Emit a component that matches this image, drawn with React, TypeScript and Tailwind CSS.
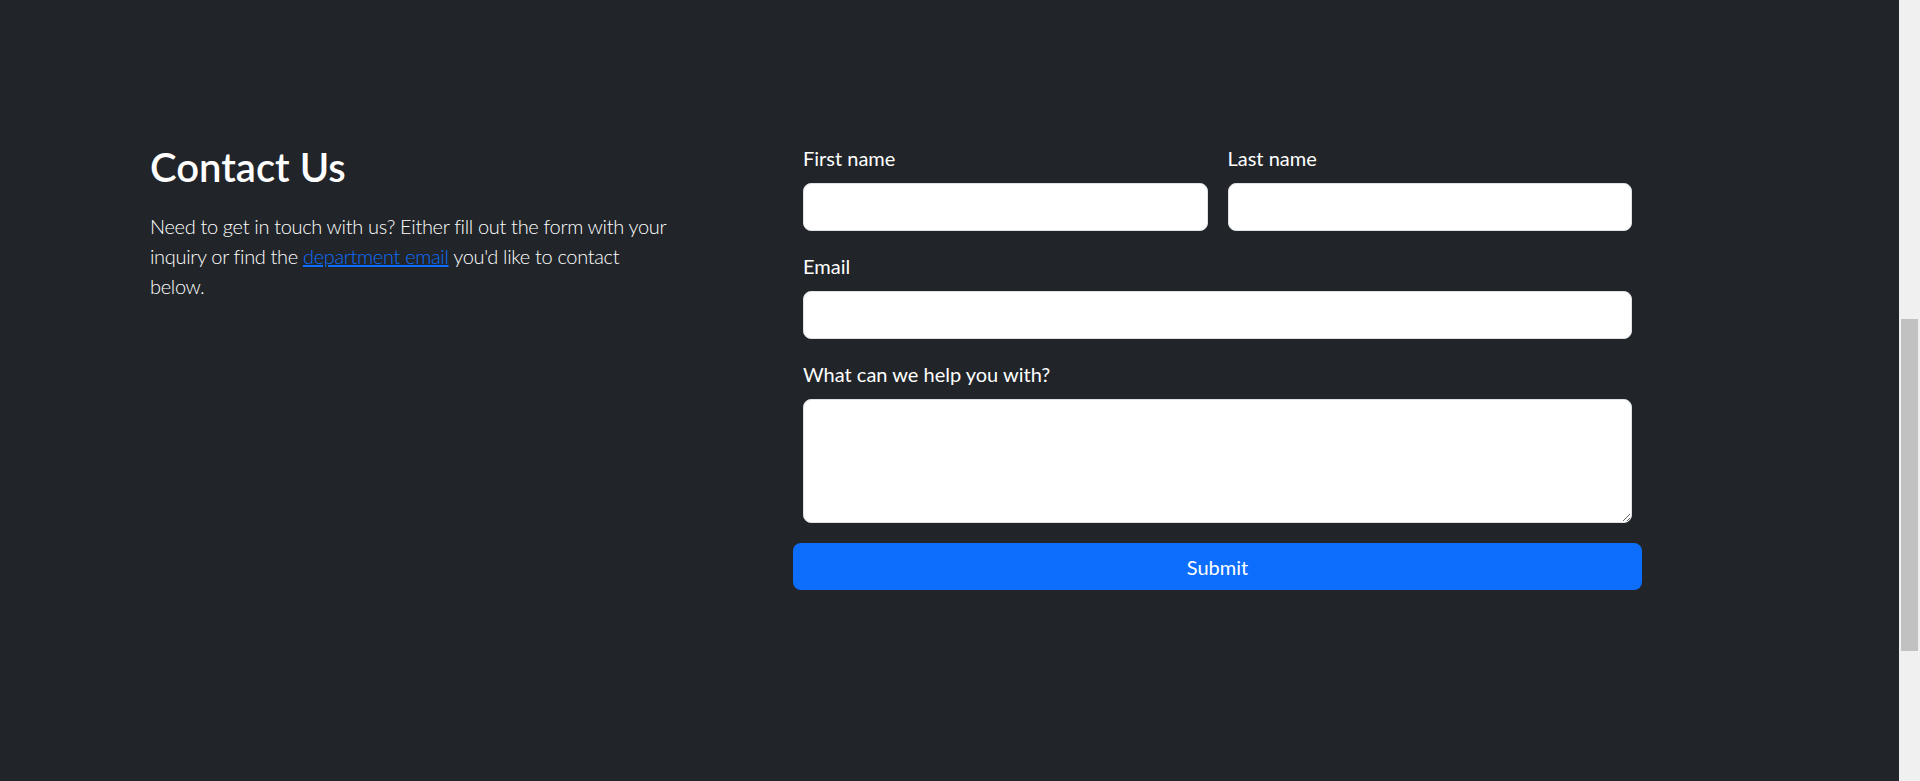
const Field = ({ label, type = 'text' }: { label: string; type?: string }) => (
    <div className="flex flex-1 flex-col">
        <label className="mb-[10px] text-[20px] leading-[30px] text-white">{label}</label>
        <input
            type={type}
            className="h-[48px] w-full rounded-[8px] border border-[#dee2e6] bg-white px-4 text-[20px] text-[#212529] outline-none"
        />
    </div>
)

const App = () => {
    return (
        <div className="flex h-[781px] w-full overflow-hidden font-['Lato',sans-serif]">
            <main className="flex-1 bg-[#212529] pt-[143px]">
                <div className="flex pl-[150px]">
                    {/* Intro */}
                    <div className="w-[527px]">
                        <h1 className="text-[40px] font-semibold leading-[48px] text-white">Contact Us</h1>
                        <p className="mt-[20px] text-[20px] font-light leading-[30px] tracking-[-0.33px] text-white">
                            Need to get in touch with us? Either fill out the form with your inquiry or find the{' '}
                            <a href="#" className="text-[#0d6efd] underline">
                                department email
                            </a>{' '}
                            you'd like to contact below.
                        </p>
                    </div>

                    {/* Form */}
                    <form className="ml-[116px] w-[849px]" onSubmit={(e) => e.preventDefault()}>
                        <div className="flex flex-col gap-[20px] px-[10px]">
                            <div className="flex gap-[20px]">
                                <Field label="First name" />
                                <Field label="Last name" />
                            </div>
                            <Field label="Email" type="email" />
                            <div className="flex flex-col">
                                <label className="mb-[10px] text-[20px] leading-[30px] text-white">
                                    What can we help you with?
                                </label>
                                <textarea className="h-[124px] w-full rounded-[8px] border border-[#dee2e6] bg-white px-4 py-2 text-[20px] text-[#212529] outline-none" />
                            </div>
                        </div>
                        <button
                            type="submit"
                            className="mt-[20px] h-[47px] w-full rounded-[8px] bg-[#0d6efd] text-[20px] text-white"
                        >
                            Submit
                        </button>
                    </form>
                </div>
            </main>

            {/* Scrollbar */}
            <div className="w-[21px] bg-[#f0f0f0] px-[2px] pt-[319px]">
                <div className="h-[332px] bg-[#c1c1c1]" />
            </div>
        </div>
    )
}

export default App
